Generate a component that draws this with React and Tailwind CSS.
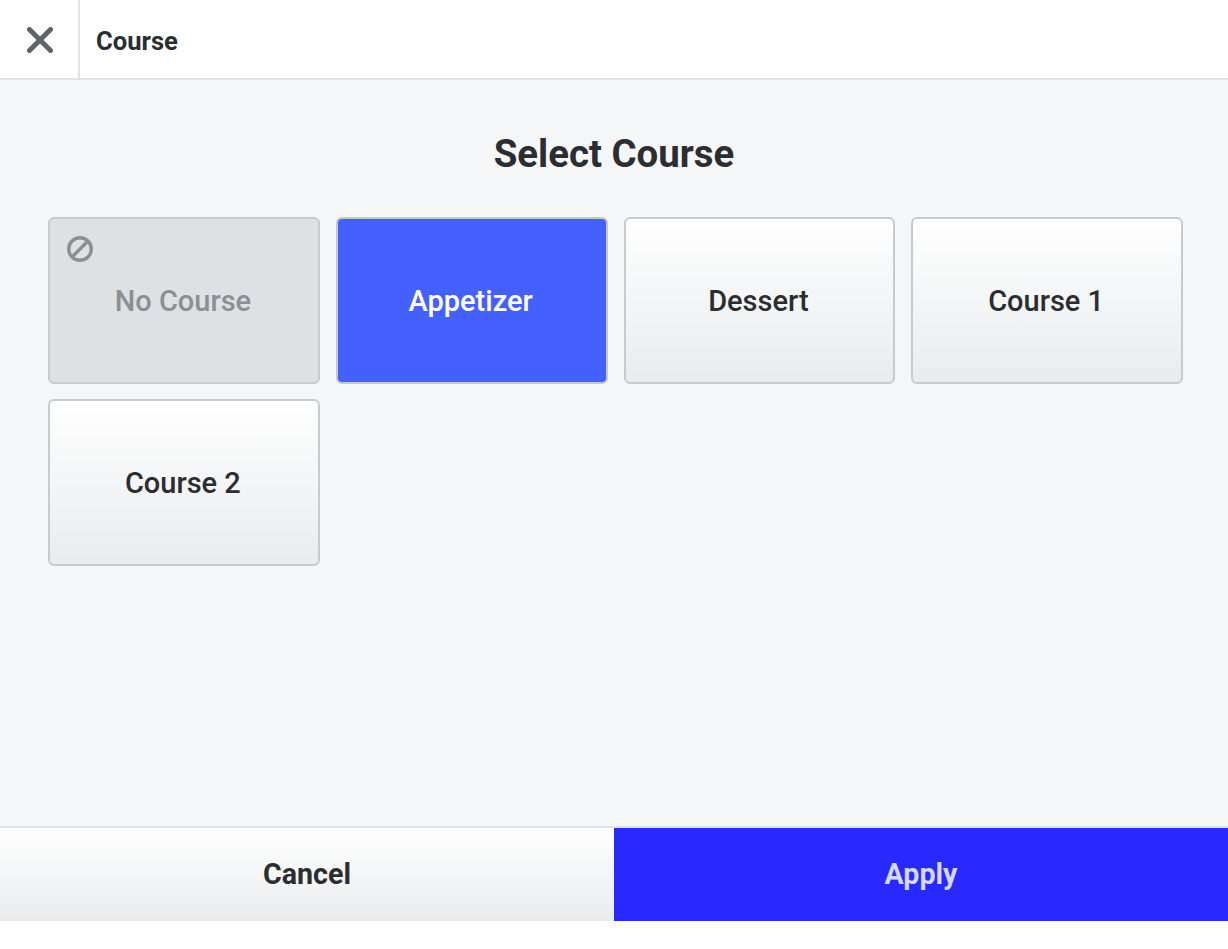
import React from 'react';

const COURSES = ['Appetizer', 'Dessert', 'Course 1', 'Course 2'];

function CloseIcon() {
  return (
    <svg width="26" height="26" viewBox="0 0 26 26" fill="none" stroke="#5f6468" strokeWidth="5" strokeLinecap="round">
      <path d="M2.5 2.5 L23.5 23.5 M23.5 2.5 L2.5 23.5" />
    </svg>
  );
}

function NoneIcon() {
  return (
    <svg width="26" height="26" viewBox="0 0 26 26" fill="none" stroke="#8b8f94" strokeWidth="3.4">
      <circle cx="13" cy="13" r="11.3" />
      <path d="M5 21 L21 5" />
    </svg>
  );
}

function CourseButton({ label, selected }) {
  const look = selected
    ? 'bg-[#4460ff] text-white border-[#c4c8cc]'
    : 'bg-gradient-to-b from-white to-[#e9ebed] text-[#2b2d30] border-[#c8cbce]';
  return (
    <div className={`h-[167px] pt-[3px] pr-[2px] rounded-md border-2 flex items-center justify-center text-[29px] font-medium ${look}`}>
      {label}
    </div>
  );
}

export default function App() {
  return (
    <div className="w-[1228px] h-[949px] bg-white flex flex-col font-['Roboto',sans-serif] overflow-hidden">
      <header className="h-[80px] flex items-stretch border-b-2 border-[#e1e4e7] bg-white">
        <div className="w-[80px] pt-[2px] pl-[1px] flex items-center justify-center border-r-2 border-[#e1e4e7]">
          <CloseIcon />
        </div>
        <div className="flex items-center pl-[16px] pt-[4px] text-[25.6px] font-bold text-[#2b2d30]">Course</div>
      </header>

      <main className="h-[746px] bg-[#f5f6f8] pl-[48px] pr-[45px] flex flex-col">
        <h1 className="mt-[49px] -ml-[48px] -mr-[45px] h-[50px] flex items-center justify-center text-[38.4px] font-bold text-[#2b2d30]">Select Course</h1>
        <div className="mt-[38px] grid grid-cols-4 gap-x-[16px] gap-y-[15px]">
          <div className="relative h-[167px] pt-[3px] pr-[2px] rounded-md border-2 border-[#c8cbce] bg-[#dee1e4] flex items-center justify-center text-[29px] font-medium text-[#8b8f94]">
            <span className="absolute left-[17px] top-[17px]"><NoneIcon /></span>
            No Course
          </div>
          {COURSES.map((c) => (
            <CourseButton key={c} label={c} selected={c === 'Appetizer'} />
          ))}
        </div>
      </main>

      <footer className="h-[95px] flex">
        <div className="w-1/2 flex items-center justify-center border-t-2 border-[#dfe1e3] bg-gradient-to-b from-white to-[#e9ebed] text-[28.6px] font-bold text-[#2b2d30]">Cancel</div>
        <div className="w-1/2 flex items-center justify-center border-t-2 border-[#dfe1e3] bg-[#2729ff] text-[28.6px] font-bold text-[#d6d8ff]">Apply</div>
      </footer>
      <div className="flex-1 bg-white" />
    </div>
  );
}
